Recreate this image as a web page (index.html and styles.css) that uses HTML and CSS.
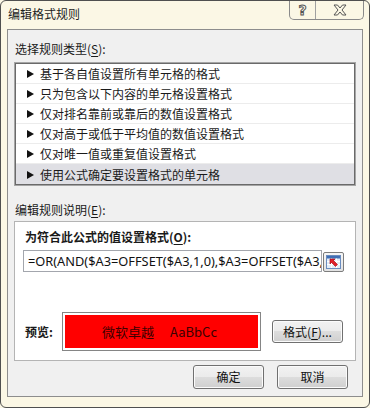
FILE: index.html
```html
<!DOCTYPE html>
<html lang="zh-CN">
<head>
<meta charset="utf-8">
<title>编辑格式规则</title>
<link rel="stylesheet" href="styles.css">
</head>
<body>
<div class="window">
  <div class="titlebar">
    <div class="title">编辑格式规则</div>
    <div class="caption-btns">
      <div class="cap cap-help"><span class="hollow">?</span></div>
      <div class="cap cap-close">
        <svg width="16" height="12" viewBox="0 0 16 12">
          <polygon points="2,1 5.5,1 8,4 10.5,1 14,1 10,6 14,11 10.5,11 8,8 5.5,11 2,11 6,6" fill="#fbf7e5" stroke="#555" stroke-width="1" stroke-linejoin="round"/>
        </svg>
      </div>
    </div>
  </div>
  <div class="client">
    <div class="label label-top">选择规则类型(<u>S</u>):</div>
    <div class="listbox">
      <div class="row"><span class="tri"></span>基于各自值设置所有单元格的格式</div>
      <div class="row"><span class="tri"></span>只为包含以下内容的单元格设置格式</div>
      <div class="row"><span class="tri"></span>仅对排名靠前或靠后的数值设置格式</div>
      <div class="row"><span class="tri"></span>仅对高于或低于平均值的数值设置格式</div>
      <div class="row"><span class="tri"></span>仅对唯一值或重复值设置格式</div>
      <div class="row selected"><span class="tri"></span>使用公式确定要设置格式的单元格</div>
    </div>
    <div class="label label-desc">编辑规则说明(<u>E</u>):</div>
    <div class="group">
      <div class="bold-label">为符合此公式的值设置格式(<u>O</u>):</div>
      <div class="input-row">
        <div class="textbox"><span class="formula">=OR(AND($A3=OFFSET($A3,1,0),$A3=OFFSET($A3,</span></div>
        <div class="refedit">
          <svg width="15" height="14" viewBox="0 0 15 14">
            <rect x="0.5" y="0.5" width="14" height="13" fill="#e3edf8" stroke="#6a8cbf"/>
            <rect x="1" y="1" width="13" height="2.5" fill="#3f6fb5"/>
            <line x1="1" y1="6.5" x2="14" y2="6.5" stroke="#ffffff"/>
            <line x1="1" y1="9.5" x2="14" y2="9.5" stroke="#ffffff"/>
            <line x1="5.5" y1="3.5" x2="5.5" y2="13" stroke="#ffffff"/>
            <line x1="10.5" y1="3.5" x2="10.5" y2="13" stroke="#ffffff"/>
            <polygon points="4,4 9,4 7.5,5.5 11.5,9.5 9.5,11.5 5.5,7.5 4,9" fill="#e0202a" stroke="#a00010" stroke-width="0.6"/>
          </svg>
        </div>
      </div>
      <div class="preview-row">
        <div class="bold-label preview-label">预览:</div>
        <div class="preview-box">
          <div class="preview-fill"><span>微软卓越</span><span>AaBbCc</span></div>
        </div>
        <button class="btn btn-format">格式(<u>F</u>)...</button>
      </div>
    </div>
    <div class="actions">
      <button class="btn">确定</button>
      <button class="btn">取消</button>
    </div>
  </div>
</div>
</body>
</html>
```

FILE: styles.css
```css
* { box-sizing: border-box; }
html, body {
  margin: 0;
  padding: 0;
  background: #fbf7e5;
}
body {
  font-family: "Noto Sans CJK SC", "Noto Sans", sans-serif;
  font-size: 12px;
  color: #1a1a1a;
}
u { text-decoration: underline; text-underline-offset: 2px; }

.window {
  width: 370px;
  height: 408px;
  border: 1px solid #4f4f4f;
  border-radius: 6px;
  background: #fbf7e5;
  overflow: hidden;
}

.titlebar {
  height: 28px;
  display: flex;
  align-items: flex-start;
}
.title {
  padding: 5px 0 0 7px;
  line-height: 16px;
  font-size: 12px;
  color: #1e1e1e;
}
.caption-btns {
  margin-left: auto;
  margin-right: 5px;
  margin-top: -1px;
  display: flex;
  height: 20px;
  border: 1px solid #8a8a8a;
  border-top: none;
  border-radius: 0 0 5px 5px;
  background: #fbf7e5;
}
.cap {
  height: 19px;
  display: flex;
  align-items: center;
  justify-content: center;
}
.cap-help {
  width: 26px;
  border-right: 1px solid #a0a0a0;
}
.cap-close {
  width: 47px;
}
.hollow {
  font-family: "DejaVu Sans", sans-serif;
  font-weight: bold;
  font-size: 14px;
  line-height: 14px;
  color: #fbf7e5;
  -webkit-text-stroke: 1px #555;
}

.client {
  margin: 0 6px;
  height: 368px;
  border: 1px solid #8d8d8d;
  background: #f0f0f0;
  padding: 0 6px;
  display: flex;
  flex-direction: column;
}
.label {
  line-height: 16px;
  padding-left: 1px;
}
.label-top { margin-top: 11px; }
.label-desc { margin-top: 16px; }

.listbox {
  margin-top: 5px;
  border: 1px solid #a5a5a5;
  box-shadow: inset 0 0 0 1px #6a6a6a;
  padding: 1px;
  background: #fff;
}
.row {
  height: 20px;
  display: flex;
  align-items: center;
  border-bottom: 1px solid #ececec;
  line-height: 16px;
  padding-top: 1px;
}
.row:last-child { border-bottom: none; }
.row.selected { background: #dfdfe4; }
.tri {
  width: 0;
  height: 0;
  margin-left: 11px;
  margin-right: 6px;
  border-top: 4px solid transparent;
  border-bottom: 4px solid transparent;
  border-left: 7px solid #111;
}

.group {
  margin-top: 3px;
  height: 140px;
  background: #fff;
  border: 1px solid #b4b4b4;
  display: flex;
  flex-direction: column;
}
.bold-label {
  font-weight: bold;
  line-height: 16px;
}
.group > .bold-label {
  margin-top: 7px;
  padding-left: 10px;
}
.input-row {
  margin-top: 5px;
  margin-left: 8px;
  display: flex;
  align-items: flex-start;
}
.textbox {
  width: 299px;
  height: 22px;
  border: 1px solid #a3a6ad;
  background: #fff;
  overflow: hidden;
  white-space: nowrap;
  padding: 0 0 0 4px;
  display: flex;
  align-items: center;
}
.formula {
  font-family: "Noto Sans", sans-serif;
  font-size: 12.8px;
  color: #111;
}
.refedit {
  margin-left: 1px;
  margin-top: 2px;
  width: 21px;
  height: 20px;
  border: 1px solid #7c7c7c;
  border-radius: 2px;
  background: linear-gradient(#f6f6f6, #e2e2e2);
  display: flex;
  align-items: center;
  justify-content: center;
}

.preview-row {
  margin-top: 40px;
  display: flex;
  align-items: center;
}
.preview-label {
  width: 47px;
  padding-left: 10px;
}
.preview-box {
  width: 199px;
  height: 39px;
  border: 1px solid #858585;
  padding: 2px;
  background: #fff;
}
.preview-fill {
  height: 100%;
  background: #ff0000;
  display: flex;
  align-items: center;
  justify-content: center;
  gap: 16px;
  font-size: 13px;
  color: #3c0000;
  padding-right: 4px;
}

.btn {
  font-family: "Noto Sans CJK SC", "Noto Sans", sans-serif;
  font-size: 12px;
  color: #111;
  width: 71px;
  height: 24px;
  padding: 0;
  border: 1px solid #707070;
  border-radius: 3px;
  background: linear-gradient(#f2f2f2 0%, #ebebeb 50%, #dddddd 50%, #cfcfcf 100%);
  box-shadow: inset 0 0 0 1px #fbfbfb;
  line-height: 16px;
}
.btn-format {
  margin-left: 11px;
  height: 23px;
}

.actions {
  margin-top: 4px;
  display: flex;
  justify-content: flex-end;
  gap: 13px;
  padding-right: 8px;
}
```
